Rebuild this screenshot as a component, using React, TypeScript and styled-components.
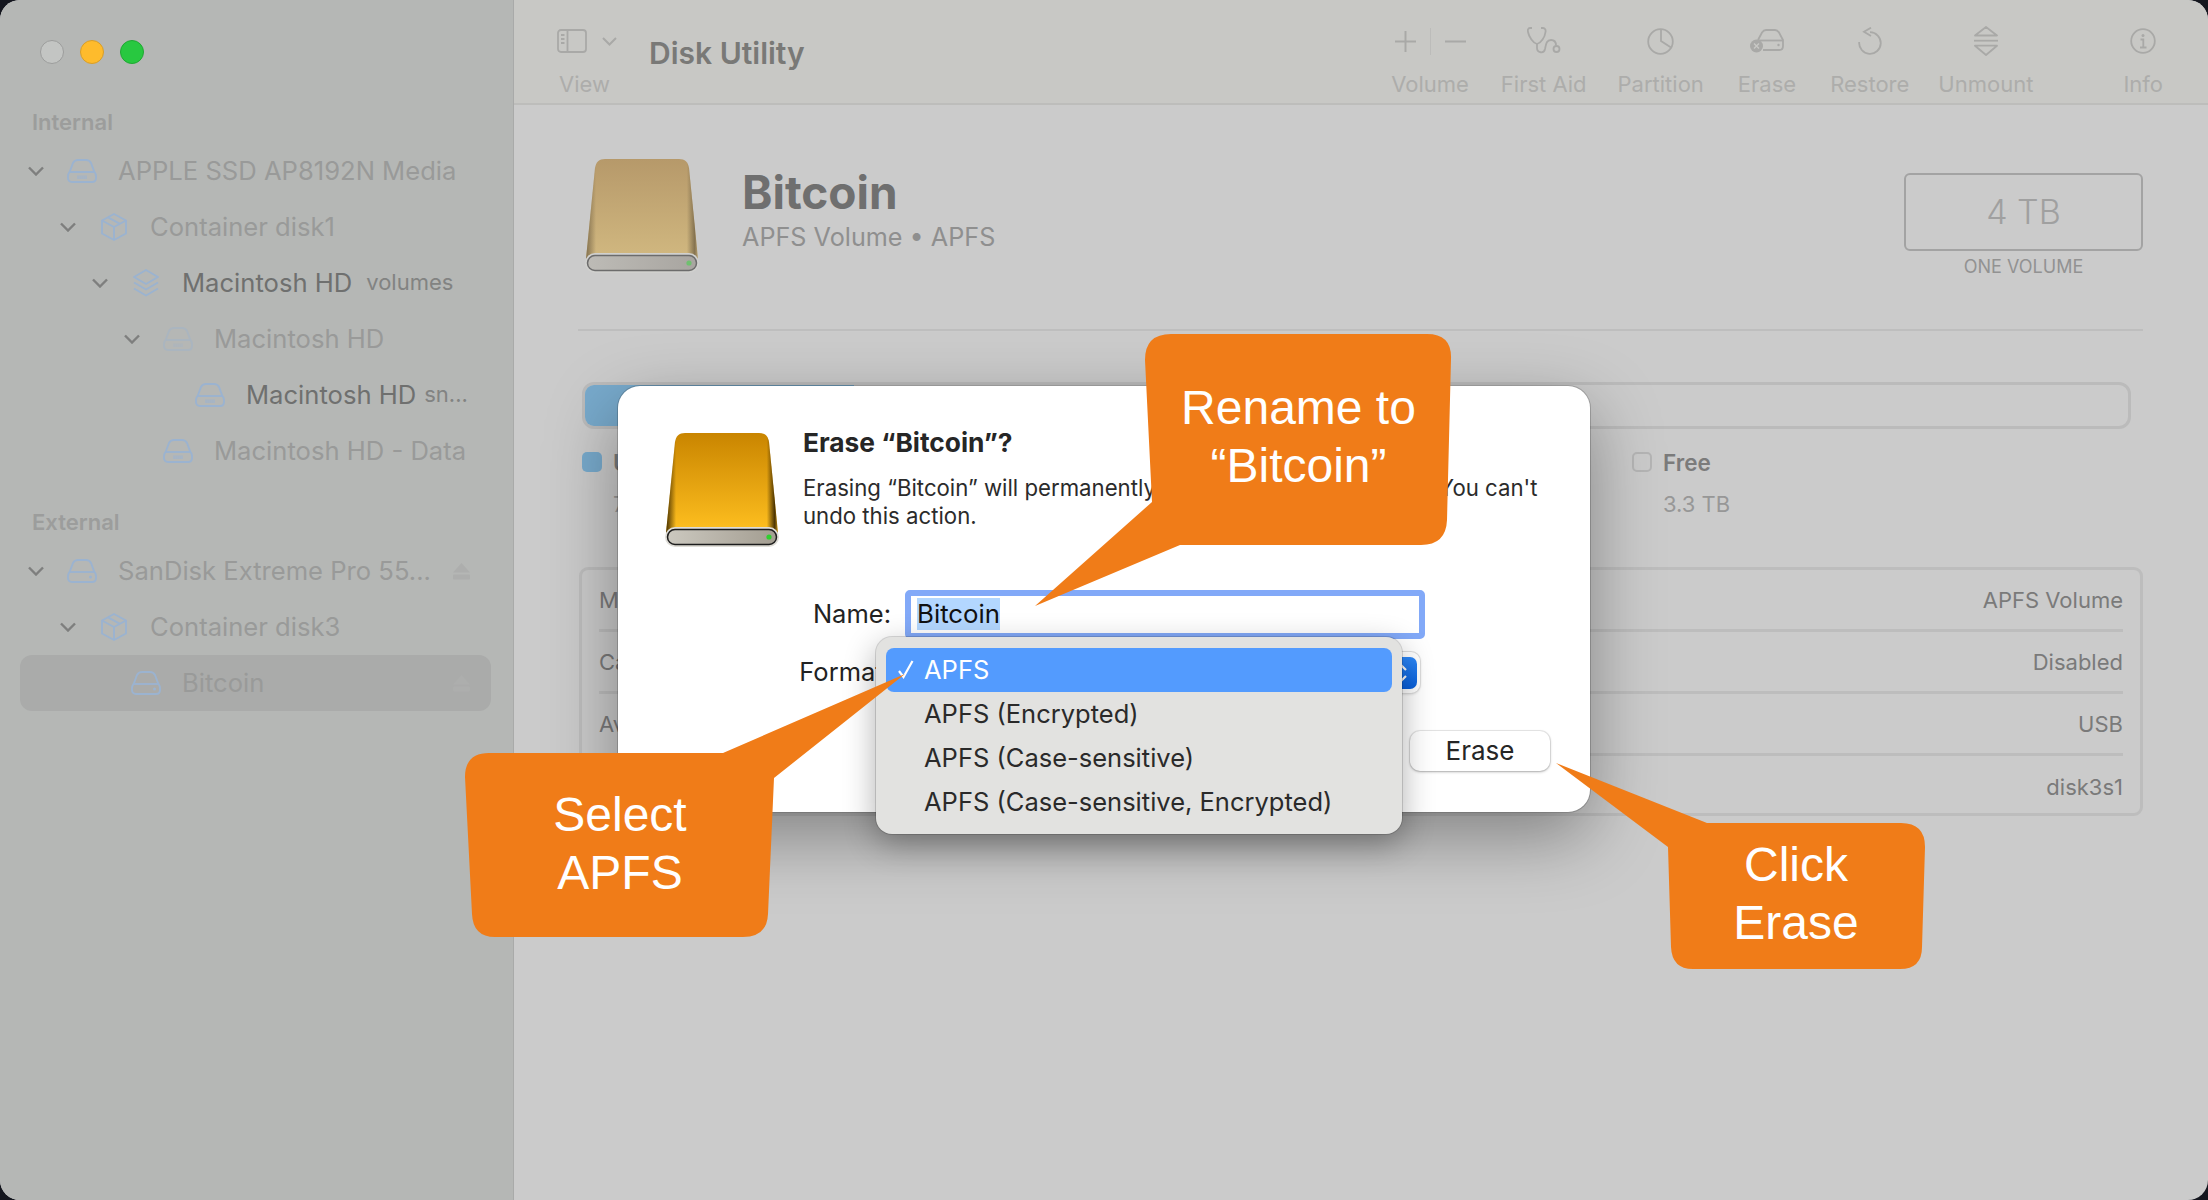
import React, { useId } from "react";
import styled, { createGlobalStyle } from "styled-components";

const GlobalStyle = createGlobalStyle`
  html, body {
    margin: 0;
    background: #14161e;
    font-family: Inter, "Liberation Sans", sans-serif;
  }
  * { box-sizing: border-box; }
`;

/* window shell */
const Stage = styled.div`
  position: relative;
  width: 2208px;
  height: 1200px;
  overflow: hidden;
`;

const Window = styled.div`
  display: flex;
  width: 100%;
  height: 100%;
  border-radius: 20px;
  overflow: hidden;
  background: #cbcbcb;
`;

/* sidebar */
const Sidebar = styled.aside`
  width: 514px;
  flex: none;
  padding-top: 40px;
  background: #b5b7b5;
  border-right: 1px solid #a9aaa9;
`;

const TrafficLights = styled.div`
  display: flex;
  gap: 16px;
  padding-left: 40px;
`;

const Light = styled.span<{ $fill: string; $edge: string }>`
  width: 24px;
  height: 24px;
  border-radius: 50%;
  background: ${(p) => p.$fill};
  border: 1px solid ${(p) => p.$edge};
`;

const SectionLabel = styled.div<{ $first?: boolean }>`
  height: 40px;
  margin-top: ${(p) => (p.$first ? "39px" : "24px")};
  padding-left: 32px;
  font-size: 22px;
  font-weight: 600;
  line-height: 38px;
  color: #9c9d9c;
`;

const Row = styled.div<{ $level: number; $selected?: boolean }>`
  display: flex;
  align-items: center;
  height: 56px;
  margin: 0 22px 0 20px;
  padding: 0 21px 0 ${(p) => 8 + p.$level * 32}px;
  border-radius: 12px;
  background: ${(p) => (p.$selected ? "#aaabaa" : "transparent")};
`;

const ChevronSlot = styled.svg<{ $hidden?: boolean }>`
  width: 16px;
  height: 10px;
  flex: none;
  margin-right: 23px;
  visibility: ${(p) => (p.$hidden ? "hidden" : "visible")};
  fill: none;
  stroke: #7e7f7e;
  stroke-width: 2.4;
`;

const IconSlot = styled.span<{ $faded?: boolean }>`
  display: flex;
  justify-content: center;
  width: 30px;
  flex: none;
  margin-right: 21px;
  color: #9bb3d0;
  opacity: ${(p) => (p.$faded ? 0.4 : 1)};
`;

const RowText = styled.span<{ $dark?: boolean }>`
  padding-bottom: 2px;
  font-size: 25.6px;
  white-space: nowrap;
  color: ${(p) => (p.$dark ? "#6f706f" : "#999a99")};
`;

const RowNote = styled.span<{ $tight?: boolean }>`
  margin-left: ${(p) => (p.$tight ? "8px" : "14px")};
  padding-bottom: 2px;
  font-size: 22px;
  white-space: nowrap;
  color: #828382;
`;

const EjectIcon = styled.svg`
  width: 17px;
  height: 17px;
  margin-left: auto;
  fill: #adaead;
`;

/* toolbar */
const Main = styled.main`
  flex: 1;
  min-width: 0;
  display: flex;
  flex-direction: column;
`;

const Toolbar = styled.header`
  display: flex;
  height: 105px;
  flex: none;
  padding: 0 45px 0 43px;
  background: #c8c8c5;
  border-bottom: 2px solid #bdbdbb;
`;

const ViewTool = styled.div`
  display: flex;
  flex-direction: column;
  align-items: flex-start;
  width: 60px;
  flex: none;
`;

const ViewIcons = styled.div`
  display: flex;
  align-items: center;
  gap: 15px;
  height: 70px;
  padding-top: 12px;
  color: #a9a9a7;
`;

const ViewLabel = styled.span`
  margin-left: 2px;
  font-size: 22px;
  line-height: 28px;
  color: #adadab;
`;

const WindowTitle = styled.h1`
  margin: 34px 0 0 32px;
  font-size: 30px;
  font-weight: 600;
  line-height: 38px;
  white-space: nowrap;
  color: #797977;
`;

const ToolGroup = styled.nav`
  display: flex;
  margin-left: auto;
`;

const Tool = styled.div<{ $gap: number }>`
  display: flex;
  flex-direction: column;
  align-items: center;
  margin-left: ${(p) => p.$gap}px;
  color: #a9a9a7;
`;

const ToolIcon = styled.div`
  display: flex;
  align-items: center;
  justify-content: center;
  height: 70px;
  padding-top: 12px;
`;

const ToolLabel = styled.span`
  font-size: 22px;
  line-height: 28px;
  white-space: nowrap;
  color: #adadab;
`;

const VolumeDivider = styled.span`
  width: 1px;
  height: 27px;
  margin: 0 14px;
  background: #bcbcba;
`;

/* volume pane */
const Content = styled.section`
  flex: 1;
  padding: 54px 65px 0 64px;
`;

const VolumeHeader = styled.div`
  display: flex;
  height: 114px;
`;

const HeaderDrive = styled.div`
  margin-left: 7px;
  flex: none;
`;

const VolumeText = styled.div`
  margin: 6px 0 0 43px;
`;

const VolumeName = styled.h2`
  margin: 0;
  font-size: 46px;
  font-weight: 700;
  line-height: 54px;
  color: #6f6f6f;
`;

const VolumeMeta = styled.p`
  margin: 2px 0 0;
  font-size: 25.2px;
  line-height: 32px;
  color: #8f8f8f;
`;

const Capacity = styled.div`
  margin: 14px 0 0 auto;
  width: 239px;
  text-align: center;
`;

const CapacityBox = styled.div`
  height: 78px;
  border: 2px solid #a3a3a3;
  border-radius: 6px;
  font-size: 34px;
  font-weight: 300;
  line-height: 74px;
  color: #a0a0a0;
`;

const CapacityNote = styled.div`
  margin-top: 5px;
  font-size: 18px;
  line-height: 22px;
  color: #929292;
`;

const Rule = styled.hr`
  margin: 56px 0 0;
  border: 0;
  border-top: 2px solid #bebebe;
`;

const UsageBar = styled.div`
  height: 47px;
  margin: 51px 12px 0 4px;
  border: 3px solid #bbbbbb;
  border-radius: 12px;
  overflow: hidden;
`;

const UsageFill = styled.div<{ $width: number }>`
  width: ${(p) => p.$width}px;
  height: 100%;
  margin: -3px 0 0 -3px;
  box-sizing: content-box;
  padding: 3px 0;
  background: #78aacc;
`;

const Legend = styled.div`
  display: grid;
  grid-template-columns: 1050px 1fr;
  height: 115px;
  margin: 23px 0 0 4px;
`;

const LegendItem = styled.div`
  display: flex;
  gap: 11px;
`;

const Swatch = styled.span<{ $fill?: string }>`
  width: 20px;
  height: 20px;
  border-radius: 5px;
  background: ${(p) => p.$fill ?? "transparent"};
  border: ${(p) => (p.$fill ? "0" : "2px solid #b5b5b5")};
`;

const LegendName = styled.div`
  margin-top: -3px;
  font-size: 22.5px;
  font-weight: 600;
  line-height: 28px;
  color: #7b7b7b;
`;

const LegendValue = styled.div`
  margin-top: 13px;
  font-size: 22px;
  line-height: 28px;
  color: #979797;
`;

const InfoTable = styled.div`
  height: 249px;
  margin-left: 1px;
  border: 3px solid #bdbdbd;
  border-radius: 9px;
`;

const InfoRow = styled.div`
  display: flex;
  justify-content: space-between;
  align-items: center;
  height: 62px;
  margin: 0 17px;
  font-size: 22px;
  color: #7a7a7a;
  &:not(:last-child) {
    border-bottom: 3px solid #bdbdbd;
  }
`;

/* erase sheet */
const Sheet = styled.div`
  position: absolute;
  left: 618px;
  top: 386px;
  width: 972px;
  height: 426px;
  padding: 42px 40px 0 47px;
  border-radius: 22px;
  background: #ffffff;
  box-shadow: 0 0 0 1px rgba(0, 0, 0, 0.18), 0 24px 70px rgba(0, 0, 0, 0.36);
`;

const SheetTop = styled.div`
  display: flex;
  gap: 24px;
  height: 162px;
`;

const SheetDrive = styled.div`
  margin-top: 5px;
  flex: none;
`;

const SheetTitle = styled.h3`
  margin: 0;
  font-size: 26.3px;
  font-weight: 700;
  line-height: 30px;
  white-space: nowrap;
  color: #262626;
`;

const SheetBody = styled.p`
  margin: 16px 0 0;
  font-size: 22.2px;
  line-height: 28px;
  white-space: nowrap;
  color: #2b2b2b;
`;

const SheetForm = styled.div`
  display: grid;
  grid-template-columns: 101px 520px;
  grid-template-rows: 49px 41px;
  column-gap: 14px;
  row-gap: 13px;
  margin-left: 125px;
  align-items: center;
`;

const FieldLabel = styled.label`
  padding-bottom: 3px;
  font-size: 25.5px;
  text-align: right;
  color: #222222;
`;

const NameField = styled.div`
  height: 49px;
  padding: 2px 6px;
  border: 6px solid #82a9f8;
  border-radius: 5px;
  background: #ffffff;
  font-size: 25.8px;
  line-height: 32px;
  color: #111111;
`;

const Selection = styled.span`
  display: inline-block;
  background: #b3d7ff;
`;

const FormatSelect = styled.div`
  display: flex;
  justify-content: flex-end;
  align-items: center;
  width: 515px;
  height: 41px;
  padding-right: 3px;
  border-radius: 9px;
  background: #ffffff;
  box-shadow: 0 0 0 1px #dcdcdc, 0 1px 3px rgba(0, 0, 0, 0.2);
`;

const Stepper = styled.span`
  display: flex;
  align-items: center;
  justify-content: center;
  width: 33px;
  height: 32px;
  border-radius: 7px;
  background: linear-gradient(#2c87f8, #085fdb);
`;

const SheetButtons = styled.div`
  display: flex;
  justify-content: flex-end;
  gap: 12px;
  margin-top: 38px;
`;

const SheetButton = styled.button`
  width: 140px;
  height: 40px;
  padding: 0 0 2px;
  border: 0;
  border-radius: 10px;
  background: #ffffff;
  font: 400 26px Inter, sans-serif;
  color: #262626;
  box-shadow: 0 0 0 1px rgba(0, 0, 0, 0.08), 0 1px 3px rgba(0, 0, 0, 0.28);
`;

const Menu = styled.ul`
  position: absolute;
  left: 258px;
  top: 251px;
  width: 526px;
  height: 197px;
  margin: 0;
  padding: 11px 10px;
  list-style: none;
  border-radius: 16px;
  background: #e2e2e0;
  box-shadow: 0 0 0 1px rgba(0, 0, 0, 0.14), 0 10px 32px rgba(0, 0, 0, 0.32);
`;

const MenuItem = styled.li<{ $active?: boolean }>`
  display: flex;
  align-items: center;
  height: 44px;
  padding: 0 0 2px 11px;
  border-radius: 8px;
  background: ${(p) => (p.$active ? "#539bfe" : "transparent")};
  font-size: 25.5px;
  white-space: nowrap;
  color: ${(p) => (p.$active ? "#ffffff" : "#2a2a2a")};
`;

const CheckSlot = styled.span`
  display: flex;
  width: 27px;
  flex: none;
`;

/* orange annotations */
const Callout = styled.div<{ $left: number; $top: number; $width: number; $height: number }>`
  position: absolute;
  left: ${(p) => p.$left}px;
  top: ${(p) => p.$top}px;
  width: ${(p) => p.$width}px;
  height: ${(p) => p.$height}px;
`;

const CalloutShape = styled.svg`
  display: block;
  width: 100%;
  height: 100%;
  fill: #f07c18;
`;

const CalloutText = styled.div<{ $left: number; $top: number; $width: number }>`
  position: absolute;
  left: ${(p) => p.$left}px;
  top: ${(p) => p.$top}px;
  width: ${(p) => p.$width}px;
  font-family: "Liberation Sans", Arial, sans-serif;
  font-size: 48px;
  line-height: 58px;
  text-align: center;
  color: #ffffff;
`;

type DriveTone = "bright" | "muted";

const driveColors = {
  bright: { top: "#c98500", bottom: "#ffc020", side: "#3a2700", slotA: "#cbc8bf", slotB: "#a39d91", rim: "#1c1c1c", edge: "#dedcd6", led: "#2fd02f" },
  muted: { top: "#b6996a", bottom: "#d1b880", side: "#7d6c4c", slotA: "#bdbbb6", slotB: "#a8a5a0", rim: "#6c6c6c", edge: "#d0d0ce", led: "#6fc06f" },
};

const DriveIcon = ({ tone }: { tone: DriveTone }) => {
  const id = useId();
  const c = driveColors[tone];
  const body = "M20 0H94C100 0 103 3 104 9L113 100H1L10 9C11 3 14 0 20 0Z";
  return (
    <svg width="114" height="114" viewBox="0 0 114 114">
      <defs>
        <linearGradient id={`${id}b`} x1="0" y1="0" x2="0" y2="1">
          <stop offset="0" stopColor={c.top} />
          <stop offset="1" stopColor={c.bottom} />
        </linearGradient>
        <linearGradient id={`${id}s`} x1="0" y1="0" x2="1" y2="0">
          <stop offset="0" stopColor={c.side} stopOpacity="0.95" />
          <stop offset="0.09" stopColor={c.side} stopOpacity="0" />
          <stop offset="0.9" stopColor={c.side} stopOpacity="0" />
          <stop offset="0.97" stopColor={c.side} stopOpacity="0.9" />
          <stop offset="1" stopColor={c.side} stopOpacity="0.3" />
        </linearGradient>
        <linearGradient id={`${id}l`} x1="0" y1="0" x2="1" y2="0">
          <stop offset="0" stopColor={c.slotA} />
          <stop offset="1" stopColor={c.slotB} />
        </linearGradient>
      </defs>
      <path d={body} fill={`url(#${id}b)`} />
      <path d={body} fill={`url(#${id}s)`} />
      <rect x="0" y="94" width="114" height="20" rx="10" fill={c.edge} />
      <rect x="2.5" y="96.5" width="109" height="15" rx="7.5" fill={`url(#${id}l)`} stroke={c.rim} strokeWidth="1.5" />
      <circle cx="104" cy="104" r="2.6" fill={c.led} />
    </svg>
  );
};

const DiskIcon = ({ kind }: { kind: "internal" | "external" }) => (
  <svg width="30" height="24" viewBox="0 0 30 24" fill="none" stroke="currentColor" strokeWidth="1.9">
    <path d="M1 17C1 15 2 13.5 3 12L6 4C7 2 8.5 1 11 1H19C21.5 1 23 2 24 4L27 12C28 13.5 29 15 29 17V19C29 21.5 27.5 23 25 23H5C2.5 23 1 21.5 1 19Z" />
    <path d="M2.5 13H27.5" />
    {kind === "internal" ? (
      <path d="M11 16.5V20M13 16.5V20M15 16.5V20M17 16.5V20M19 16.5V20" strokeWidth="1.1" />
    ) : (
      <circle cx="23.5" cy="18" r="1.5" fill="currentColor" stroke="none" />
    )}
  </svg>
);

const ContainerIcon = () => (
  <svg width="26" height="28" viewBox="0 0 26 28" fill="none" stroke="currentColor" strokeWidth="1.9" strokeLinejoin="round">
    <path d="M13 1L25 7.5V20.5L13 27L1 20.5V7.5Z" />
    <path d="M1 7.5L13 14L25 7.5M13 14V27M7 4.3L19 10.8" />
  </svg>
);

const StackIcon = () => (
  <svg width="26" height="28" viewBox="0 0 26 28" fill="none" stroke="currentColor" strokeWidth="1.9" strokeLinejoin="round">
    <path d="M13 1L25 8L13 15L1 8Z" />
    <path d="M1 13.5L13 20.5L25 13.5" />
    <path d="M1 19.5L13 26.5L25 19.5" />
  </svg>
);

const Chevron = ({ hidden }: { hidden?: boolean }) => (
  <ChevronSlot $hidden={hidden} viewBox="0 0 16 10">
    <path d="M1 1.5L8 8.5L15 1.5" />
  </ChevronSlot>
);

const Eject = () => (
  <EjectIcon viewBox="0 0 17 17">
    <path d="M8.5 0L17 9.5H0Z" />
    <rect y="11.5" width="17" height="5" rx="1" />
  </EjectIcon>
);

const toolStroke = { fill: "none", stroke: "currentColor", strokeWidth: 1.8 };

const PlusGlyph = () => (
  <svg width="21" height="21" viewBox="0 0 21 21" {...toolStroke} strokeWidth={2}>
    <path d="M10.5 0V21M0 10.5H21" />
  </svg>
);

const MinusGlyph = () => (
  <svg width="21" height="21" viewBox="0 0 21 21" {...toolStroke} strokeWidth={2}>
    <path d="M0 10.5H21" />
  </svg>
);

const StethoscopeGlyph = () => (
  <svg width="34" height="28" viewBox="0 0 34 28" {...toolStroke}>
    <path d="M5 1H3C1 1 .5 3 1 5C2 10 6 16 10 17C14 16 18 10 18.5 5C19 3 18 1 16 1H14" />
    <path d="M10 17V21C10 26 17 27 18 22C19 16 20 13 24 13C27 13 29 15 29 18.5" />
    <circle cx="29.5" cy="22" r="3" />
  </svg>
);

const PieGlyph = () => (
  <svg width="27" height="27" viewBox="0 0 27 27" {...toolStroke}>
    <circle cx="13.5" cy="13.5" r="12.3" />
    <path d="M14 1.5V13L24 19.5" />
  </svg>
);

const EraseGlyph = () => (
  <svg width="34" height="24" viewBox="0 0 34 24" {...toolStroke}>
    <path d="M8 11L12 3.5C13 2 14 1 16 1H25C27 1 28 2 29 3.5L33 11V17C33 19.5 32 21 29.5 21H13" />
    <path d="M9 11.5H33" />
    <circle cx="28.5" cy="16" r="1.2" fill="currentColor" stroke="none" />
    <circle cx="6.5" cy="17" r="6.5" fill="currentColor" stroke="none" />
    <path d="M4 14.5L9 19.5M9 14.5L4 19.5" stroke="#c8c8c5" strokeWidth="1.4" />
  </svg>
);

const RestoreGlyph = () => (
  <svg width="24" height="28" viewBox="0 0 24 28" {...toolStroke}>
    <path d="M12 5.2A10.8 10.8 0 1 1 1.2 15" />
    <path d="M13 .7L6 4.7L13 9" />
  </svg>
);

const UnmountGlyph = () => (
  <svg width="24" height="30" viewBox="0 0 24 30" {...toolStroke} strokeLinejoin="round">
    <path d="M12 1L23 9.5H1Z" />
    <path d="M0 14.7H24" />
    <path d="M1 19.7H23L12 29Z" />
  </svg>
);

const InfoGlyph = () => (
  <svg width="26" height="26" viewBox="0 0 26 26" {...toolStroke}>
    <circle cx="13" cy="13" r="11.8" />
    <circle cx="13" cy="7.5" r="1.5" fill="currentColor" stroke="none" />
    <path d="M10.5 11.5H13.3V19.5M10 19.5H16.5" />
  </svg>
);

const SidebarGlyph = () => (
  <svg width="30" height="24" viewBox="0 0 30 24" {...toolStroke}>
    <rect x="1" y="1" width="28" height="22" rx="3" />
    <path d="M10.5 1V23M4 6H7.5M4 10H7.5M4 14H7.5" />
  </svg>
);

const SmallChevron = () => (
  <svg width="15" height="9" viewBox="0 0 15 9" fill="none" stroke="currentColor" strokeWidth="2">
    <path d="M1 1L7.5 7.5L14 1" />
  </svg>
);

const CheckGlyph = () => (
  <svg width="18" height="20" viewBox="0 0 18 20" fill="none" stroke="#ffffff" strokeWidth="2.2">
    <path d="M2 12L6.5 18L15.5 2" />
  </svg>
);

const tools = [
  { label: "First Aid", gap: 32, icon: <StethoscopeGlyph /> },
  { label: "Partition", gap: 31, icon: <PieGlyph /> },
  { label: "Erase", gap: 34, icon: <EraseGlyph /> },
  { label: "Restore", gap: 34, icon: <RestoreGlyph /> },
  { label: "Unmount", gap: 29, icon: <UnmountGlyph /> },
  { label: "Info", gap: 90, icon: <InfoGlyph /> },
];

const infoRows = [
  ["Mount Point:", "APFS Volume"],
  ["Capacity:", "Disabled"],
  ["Available:", "USB"],
  ["Used:", "disk3s1"],
];

const formats = ["APFS (Encrypted)", "APFS (Case-sensitive)", "APFS (Case-sensitive, Encrypted)"];

export default function App() {
  return (
    <Stage>
      <GlobalStyle />
      <Window>
        <Sidebar>
          <TrafficLights>
            <Light $fill="#c3c5c3" $edge="#9c9d9c" />
            <Light $fill="#febb2c" $edge="#d79e2a" />
            <Light $fill="#28c840" $edge="#20a833" />
          </TrafficLights>

          <SectionLabel $first>Internal</SectionLabel>
          <Row $level={0}>
            <Chevron />
            <IconSlot><DiskIcon kind="internal" /></IconSlot>
            <RowText>APPLE SSD AP8192N Media</RowText>
          </Row>
          <Row $level={1}>
            <Chevron />
            <IconSlot><ContainerIcon /></IconSlot>
            <RowText>Container disk1</RowText>
          </Row>
          <Row $level={2}>
            <Chevron />
            <IconSlot><StackIcon /></IconSlot>
            <RowText $dark>Macintosh HD</RowText>
            <RowNote>volumes</RowNote>
          </Row>
          <Row $level={3}>
            <Chevron />
            <IconSlot $faded><DiskIcon kind="internal" /></IconSlot>
            <RowText>Macintosh HD</RowText>
          </Row>
          <Row $level={4}>
            <Chevron hidden />
            <IconSlot><DiskIcon kind="internal" /></IconSlot>
            <RowText $dark>Macintosh HD</RowText>
            <RowNote $tight>sn...</RowNote>
          </Row>
          <Row $level={3}>
            <Chevron hidden />
            <IconSlot><DiskIcon kind="internal" /></IconSlot>
            <RowText>Macintosh HD - Data</RowText>
          </Row>

          <SectionLabel>External</SectionLabel>
          <Row $level={0}>
            <Chevron />
            <IconSlot><DiskIcon kind="external" /></IconSlot>
            <RowText>SanDisk Extreme Pro 55...</RowText>
            <Eject />
          </Row>
          <Row $level={1}>
            <Chevron />
            <IconSlot><ContainerIcon /></IconSlot>
            <RowText>Container disk3</RowText>
          </Row>
          <Row $level={2} $selected>
            <Chevron hidden />
            <IconSlot><DiskIcon kind="external" /></IconSlot>
            <RowText>Bitcoin</RowText>
            <Eject />
          </Row>
        </Sidebar>

        <Main>
          <Toolbar>
            <ViewTool>
              <ViewIcons>
                <SidebarGlyph />
                <SmallChevron />
              </ViewIcons>
              <ViewLabel>View</ViewLabel>
            </ViewTool>
            <WindowTitle>Disk Utility</WindowTitle>
            <ToolGroup>
              <Tool $gap={0}>
                <ToolIcon>
                  <PlusGlyph />
                  <VolumeDivider />
                  <MinusGlyph />
                </ToolIcon>
                <ToolLabel>Volume</ToolLabel>
              </Tool>
              {tools.map((tool) => (
                <Tool key={tool.label} $gap={tool.gap}>
                  <ToolIcon>{tool.icon}</ToolIcon>
                  <ToolLabel>{tool.label}</ToolLabel>
                </Tool>
              ))}
            </ToolGroup>
          </Toolbar>

          <Content>
            <VolumeHeader>
              <HeaderDrive><DriveIcon tone="muted" /></HeaderDrive>
              <VolumeText>
                <VolumeName>Bitcoin</VolumeName>
                <VolumeMeta>APFS Volume • APFS</VolumeMeta>
              </VolumeText>
              <Capacity>
                <CapacityBox>4 TB</CapacityBox>
                <CapacityNote>ONE VOLUME</CapacityNote>
              </Capacity>
            </VolumeHeader>
            <Rule />
            <UsageBar><UsageFill $width={272} /></UsageBar>
            <Legend>
              <LegendItem>
                <Swatch $fill="#78aacc" />
                <div>
                  <LegendName>Used</LegendName>
                  <LegendValue>700 GB</LegendValue>
                </div>
              </LegendItem>
              <LegendItem>
                <Swatch />
                <div>
                  <LegendName>Free</LegendName>
                  <LegendValue>3.3 TB</LegendValue>
                </div>
              </LegendItem>
            </Legend>
            <InfoTable>
              {infoRows.map(([label, value]) => (
                <InfoRow key={value}>
                  <span>{label}</span>
                  <span>{value}</span>
                </InfoRow>
              ))}
            </InfoTable>
          </Content>
        </Main>
      </Window>

      <Sheet>
        <SheetTop>
          <SheetDrive><DriveIcon tone="bright" /></SheetDrive>
          <div>
            <SheetTitle>Erase “Bitcoin”?</SheetTitle>
            <SheetBody>
              Erasing “Bitcoin” will permanently erase all data stored on it. You can't
              <br />
              undo this action.
            </SheetBody>
          </div>
        </SheetTop>
        <SheetForm>
          <FieldLabel>Name:</FieldLabel>
          <NameField><Selection>Bitcoin</Selection></NameField>
          <FieldLabel>Format:</FieldLabel>
          <FormatSelect>
            <Stepper>
              <svg width="14" height="22" viewBox="0 0 14 22" fill="none" stroke="#ffffff" strokeWidth="2.2">
                <path d="M2 8L7 3L12 8M2 14L7 19L12 14" />
              </svg>
            </Stepper>
          </FormatSelect>
        </SheetForm>
        <SheetButtons>
          <SheetButton>Cancel</SheetButton>
          <SheetButton>Erase</SheetButton>
        </SheetButtons>
        <Menu>
          <MenuItem $active>
            <CheckSlot><CheckGlyph /></CheckSlot>
            APFS
          </MenuItem>
          {formats.map((format) => (
            <MenuItem key={format}>
              <CheckSlot />
              {format}
            </MenuItem>
          ))}
        </Menu>
      </Sheet>

      <Callout $left={1035} $top={334} $width={417} $height={272}>
        <CalloutShape viewBox="0 0 417 272">
          <path d="M136 0H392Q417 0 416 25L412 186Q411 211 386 211H145L0 272L117 168L110 26Q110 0 136 0Z" />
        </CalloutShape>
        <CalloutText $left={110} $top={45} $width={307}>
          Rename to
          <br />
          “Bitcoin”
        </CalloutText>
      </Callout>

      <Callout $left={465} $top={674} $width={440} $height={263}>
        <CalloutShape viewBox="0 0 440 263">
          <path d="M24 79H258L440 0L309 104L303 240Q302 263 278 263H30Q8 263 7 240L0 103Q0 79 24 79Z" />
        </CalloutShape>
        <CalloutText $left={0} $top={112} $width={310}>
          Select
          <br />
          APFS
        </CalloutText>
      </Callout>

      <Callout $left={1556} $top={763} $width={369} $height={206}>
        <CalloutShape viewBox="0 0 369 206">
          <path d="M0 0L151 60H345Q369 60 369 84L366 184Q366 206 344 206H137Q116 206 115 184L112 84Z" />
        </CalloutShape>
        <CalloutText $left={113} $top={73} $width={254}>
          Click
          <br />
          Erase
        </CalloutText>
      </Callout>
    </Stage>
  );
}
